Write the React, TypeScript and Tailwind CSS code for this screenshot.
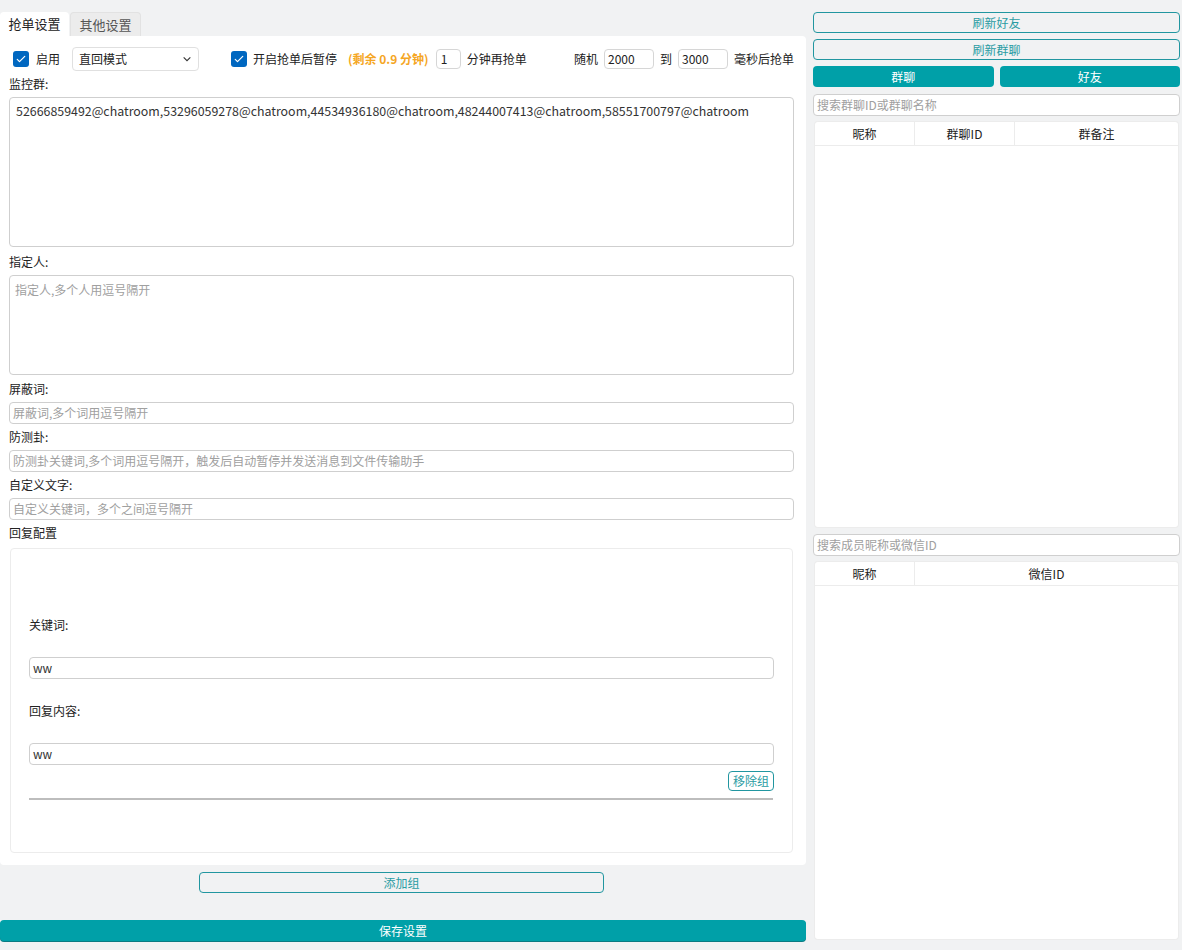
import React from "react";

const FONT = { fontFamily: '"Noto Sans CJK SC", "Noto Sans", sans-serif' };

function Check() {
  return (
    <span className="flex h-4 w-4 items-center justify-center rounded-[3px] bg-[#0067c0]">
      <svg viewBox="0 0 16 16" className="h-3 w-3" fill="none" stroke="white" strokeWidth="1.6" strokeLinecap="round" strokeLinejoin="round">
        <path d="M3 8.5l3 3 7-7" />
      </svg>
    </span>
  );
}

function Field({ placeholder, value, className = "" }: { placeholder?: string; value?: string; className?: string }) {
  return (
    <div className={`flex h-[22px] items-center rounded-[4px] border border-[#cfcfcf] bg-white px-[3px] text-[12px] ${className}`}>
      {value ? <span className="text-[#333]">{value}</span> : <span className="text-[#a0a0a0]">{placeholder}</span>}
    </div>
  );
}

function Label({ children }: { children: React.ReactNode }) {
  return <div className="text-[12px] leading-[14px] text-[#222]">{children}</div>;
}

function OutlineBtn({ children, className = "" }: { children: React.ReactNode; className?: string }) {
  return (
    <div className={`flex h-[21px] items-center justify-center rounded-[4px] border border-[#2196a0] text-[12px] text-[#2a9ca3] ${className}`}>
      {children}
    </div>
  );
}

function SolidBtn({ children, className = "" }: { children: React.ReactNode; className?: string }) {
  return (
    <div className={`flex h-[21px] items-center justify-center rounded-[4px] bg-[#00a0a8] text-[12px] text-white ${className}`}>
      {children}
    </div>
  );
}

function Table({ cols, className = "" }: { cols: { label: string; w: string }[]; className?: string }) {
  return (
    <div className={`mx-[2px] rounded-[3px] bg-white shadow-[0_0_0_1px_#ececec] ${className}`}>
      <div className="flex h-[24px] border-b border-[#ececec] text-[12px] text-[#222]">
        {cols.map((c, i) => (
          <div key={c.label} className={`flex items-center justify-center ${c.w} ${i > 0 ? "border-l border-[#ececec]" : ""}`}>
            {c.label}
          </div>
        ))}
      </div>
    </div>
  );
}

export default function App() {
  return (
    <div style={FONT} className="flex h-[950px] w-[1182px] bg-[#f1f2f3] text-[#222]">
      {/* left */}
      <div className="flex w-[806px] flex-col pt-[12px]">
        <div className="flex h-[24px] items-end text-[13px]">
          <div className="flex h-[24px] w-[69px] items-center justify-center rounded-t-[4px] bg-white text-[#222]">抢单设置</div>
          <div className="ml-[1px] flex h-[24px] w-[71px] items-center justify-center rounded-t-[4px] border border-b-0 border-[#e2e2e2] bg-[#ececec] text-[#555]">其他设置</div>
        </div>
        <div className="flex h-[829px] flex-col rounded-b-[4px] rounded-tr-[4px] bg-white pl-[9px] pr-[12px] pt-[11px]">
          <div className="flex h-[24px] items-center text-[12px]">
            <div className="ml-[4px]"><Check /></div>
            <span className="ml-[7px]">启用</span>
            <div className="ml-[12px] flex h-[24px] w-[127px] items-center justify-between rounded-[4px] border border-[#e0e0e0] px-[6px]">
              <span>直回模式</span>
              <svg viewBox="0 0 12 12" className="h-[10px] w-[10px]" fill="none" stroke="#333" strokeWidth="1.3">
                <path d="M2 4l4 4 4-4" />
              </svg>
            </div>
            <div className="ml-[32px]"><Check /></div>
            <span className="ml-[6px]">开启抢单后暂停</span>
            <span className="ml-[11px] font-bold text-[#f5a623]">(剩余 0.9 分钟)</span>
            <div className="ml-[7px] flex h-[20px] w-[25px] items-center rounded-[4px] border border-[#d6d6d6] px-[4px]">1</div>
            <span className="ml-[6px]">分钟再抢单</span>
            <span className="ml-auto">随机</span>
            <div className="ml-[6px] flex h-[20px] w-[50px] items-center rounded-[4px] border border-[#d6d6d6] px-[3px]">2000</div>
            <span className="ml-[6px]">到</span>
            <div className="ml-[6px] flex h-[20px] w-[50px] items-center rounded-[4px] border border-[#d6d6d6] px-[3px]">3000</div>
            <span className="ml-[6px]">毫秒后抢单</span>
          </div>

          <div className="mt-[6px]"><Label>监控群:</Label></div>
          <div className="mt-[6px] h-[150px] rounded-[4px] border border-[#cfcfcf] px-[6px] pt-[4px] text-[12.4px] text-[#333]">
            52666859492@chatroom,53296059278@chatroom,44534936180@chatroom,48244007413@chatroom,58551700797@chatroom
          </div>

          <div className="mt-[8px]"><Label>指定人:</Label></div>
          <div className="mt-[6px] h-[100px] rounded-[4px] border border-[#cfcfcf] px-[5px] pt-[5px] text-[12px] text-[#a0a0a0]">
            指定人,多个人用逗号隔开
          </div>

          <div className="mt-[7px]"><Label>屏蔽词:</Label></div>
          <Field className="mt-[6px]" placeholder="屏蔽词,多个词用逗号隔开" />
          <div className="mt-[6px]"><Label>防测卦:</Label></div>
          <Field className="mt-[6px]" placeholder="防测卦关键词,多个词用逗号隔开，触发后自动暂停并发送消息到文件传输助手" />
          <div className="mt-[6px]"><Label>自定义文字:</Label></div>
          <Field className="mt-[6px]" placeholder="自定义关键词，多个之间逗号隔开" />
          <div className="mt-[6px]"><Label>回复配置</Label></div>

          <div className="mx-[1px] mt-[8px] flex h-[305px] flex-col rounded-[4px] border border-[#ececec] px-[18px] pt-[69px]">
            <Label>关键词:</Label>
            <Field className="mt-[25px]" value="ww" />
            <div className="mt-[25px]"><Label>回复内容:</Label></div>
            <Field className="mt-[25px]" value="ww" />
            <div className="mt-[6px] flex justify-end">
              <div className="flex h-[20px] w-[46px] items-center justify-center rounded-[4px] border border-[#2196a0] text-[12px] text-[#2a9ca3]">移除组</div>
            </div>
            <div className="mt-[7px] mr-[1px] h-[2px] bg-[#bdbdbd]" />
          </div>
        </div>

        <div className="mt-[7px] flex justify-center">
          <OutlineBtn className="ml-[-3px] w-[405px]">添加组</OutlineBtn>
        </div>
        <SolidBtn className="mt-[27px] shadow-[0_1px_0_#0b7b82]">保存设置</SolidBtn>
      </div>

      {/* right */}
      <div className="ml-[7px] flex w-[367px] flex-col pt-[12px]">
        <OutlineBtn>刷新好友</OutlineBtn>
        <OutlineBtn className="mt-[6px]">刷新群聊</OutlineBtn>
        <div className="mt-[6px] flex gap-[6px]">
          <SolidBtn className="flex-1">群聊</SolidBtn>
          <SolidBtn className="flex-1">好友</SolidBtn>
        </div>
        <Field className="mt-[7px]" placeholder="搜索群聊ID或群聊名称" />
        <Table
          className="mt-[6px] h-[405px]"
          cols={[
            { label: "昵称", w: "w-[99px]" },
            { label: "群聊ID", w: "w-[100px]" },
            { label: "群备注", w: "flex-1" },
          ]}
        />
        <Field className="mt-[7px]" placeholder="搜索成员昵称或微信ID" />
        <Table
          className="mt-[6px] h-[377px]"
          cols={[
            { label: "昵称", w: "w-[99px]" },
            { label: "微信ID", w: "flex-1" },
          ]}
        />
      </div>
    </div>
  );
}
